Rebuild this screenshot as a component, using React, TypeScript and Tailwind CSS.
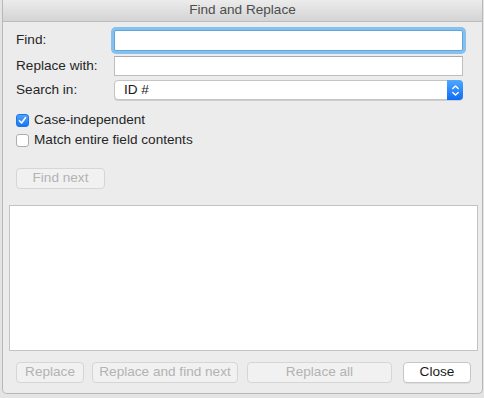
import React from 'react'

const font = { fontFamily: '"Liberation Sans", Arial, sans-serif' }

function Checkbox({ checked }: { checked?: boolean }) {
  if (checked) {
    return (
      <span className="w-[13px] h-[13px] rounded-[3px] bg-gradient-to-b from-[#4ba3fb] to-[#1677f5] border border-[#1a74e8] flex items-center justify-center">
        <svg width="9" height="9" viewBox="0 0 9 9">
          <path d="M1.5 4.8 L3.6 7 L7.6 1.6" fill="none" stroke="white" strokeWidth="1.6" strokeLinecap="round" strokeLinejoin="round" />
        </svg>
      </span>
    )
  }
  return <span className="w-[13px] h-[13px] rounded-[3px] bg-white border border-[#adadad]" />
}

function Btn({ label, w, disabled }: { label: string; w: string; disabled?: boolean }) {
  return (
    <div
      className={
        'h-[21px] rounded-[4px] border flex items-center justify-center text-[13.6px] ' +
        w +
        (disabled ? ' bg-[#f1f1f1] border-[#d6d6d6] text-[#b3b3b3]' : ' bg-white border-[#c6c6c6] text-[#1a1a1a] shadow-[0_1px_0_rgba(0,0,0,0.06)]')
      }
    >
      {label}
    </div>
  )
}

export default function App() {
  return (
    <div className="w-[484px] h-[398px] bg-[#e4e4e4] overflow-hidden" style={font}>
      <div className="ml-[2px] w-[481px] h-[394px] bg-[#ececec] border-x border-b border-[#b8b8b8] rounded-b-[5px] flex flex-col">
        <div className="h-[22px] bg-gradient-to-b from-[#ececec] to-[#d4d4d4] border-b border-[#bdbdbd] flex items-center justify-center text-[13.6px] text-[#4d4d4d]">
          Find and Replace
        </div>

        <div className="pl-[13px] pr-[19px] pt-[8px] flex flex-col text-[13.6px] text-[#262626]">
          <div className="flex items-center h-[21px]">
            <span className="w-[98px]">Find:</span>
            <div className="flex-1 h-[21px] bg-white border border-[#5fa6dc] rounded-[2px] ring-[3px] ring-[#86c0ef]" />
          </div>
          <div className="flex items-center h-[20px] mt-[5px]">
            <span className="w-[98px]">Replace with:</span>
            <div className="flex-1 h-[20px] bg-white border border-[#bdbdbd] border-t-[#a9a9a9]" />
          </div>
          <div className="flex items-center h-[20px] mt-[4px]">
            <span className="w-[98px]">Search in:</span>
            <div className="flex-1 h-[20px] bg-white rounded-[4px] border border-[#c4c4c4] flex items-center shadow-[0_1px_0_rgba(0,0,0,0.12)]">
              <span className="flex-1 pl-[9px] text-[#1a1a1a]">ID #</span>
              <div className="w-[16px] h-[20px] -mr-px rounded-r-[4px] bg-gradient-to-b from-[#4fa8fd] to-[#0a6cf7] flex items-center justify-center">
                <svg width="9" height="13" viewBox="0 0 9 13">
                  <path d="M1.8 4.6 L4.5 2 L7.2 4.6 M1.8 8.4 L4.5 11 L7.2 8.4" fill="none" stroke="white" strokeWidth="1.4" strokeLinecap="round" strokeLinejoin="round" />
                </svg>
              </div>
            </div>
          </div>

          <div className="flex items-center gap-[5px] mt-[13px] h-[14px]">
            <Checkbox checked />
            <span>Case-independent</span>
          </div>
          <div className="flex items-center gap-[5px] mt-[6px] h-[14px]">
            <Checkbox />
            <span>Match entire field contents</span>
          </div>

          <div className="mt-[21px]">
            <Btn label="Find next" w="w-[89px]" disabled />
          </div>
        </div>

        <div className="ml-[6px] mr-[4px] mt-[16px] h-[146px] bg-white border border-[#c3c3c3]" />

        <div className="flex items-center mt-[11px] pl-[13px]">
          <Btn label="Replace" w="w-[68px]" disabled />
          <div className="w-[8px]" />
          <Btn label="Replace and find next" w="w-[146px]" disabled />
          <div className="w-[9px]" />
          <Btn label="Replace all" w="w-[145px]" disabled />
          <div className="w-[11px]" />
          <Btn label="Close" w="w-[68px]" />
        </div>
      </div>
    </div>
  )
}
